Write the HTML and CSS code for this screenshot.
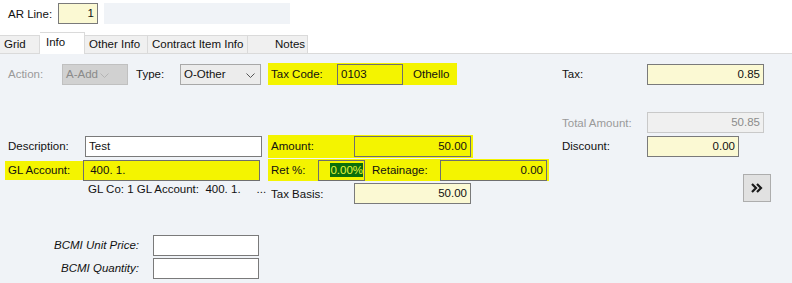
FILE: index.html
```html
<!DOCTYPE html>
<html lang="en">
<head>
    <meta charset="UTF-8">
    <title>AR Line</title>
    <link rel="stylesheet" href="styles.css">
</head>
<body>
    <div class="top">
        <span class="lbl ar-lbl">AR Line:</span>
        <div class="field yellow ar-field">1</div>
        <div class="ar-desc"></div>
    </div>

    <div class="tabs">
        <div class="tab tab-grid">Grid</div>
        <div class="tab active tab-info">Info</div>
        <div class="tab tab-other">Other Info</div>
        <div class="tab tab-contract">Contract Item Info</div>
        <div class="tab tab-notes">Notes</div>
    </div>

    <div class="panel">
        <!-- left column -->
        <div class="cell c1 r1">
            <span class="lbl dim w-action">Action:</span>
            <div class="combo disabled w-add">A-Add
                <svg class="chev" width="9" height="5" viewBox="0 0 9 5"><polyline points="0.5,0.5 4.5,4.5 8.5,0.5" fill="none" stroke="#b4b4b4" stroke-width="1"/></svg>
            </div>
            <span class="lbl w-type">Type:</span>
            <div class="combo w-other">O-Other
                <svg class="chev" width="9" height="5" viewBox="0 0 9 5"><polyline points="0.5,0.5 4.5,4.5 8.5,0.5" fill="none" stroke="#555" stroke-width="1"/></svg>
            </div>
        </div>
        <div class="cell c1 r4">
            <span class="lbl w-left">Description:</span>
            <div class="field white w-desc">Test</div>
        </div>
        <div class="cell c1 r5">
            <div class="hl hl-gl">
                <span class="lbl w-left-hl">GL Account:</span>
                <div class="field left w-desc">&nbsp;400. 1.</div>
            </div>
        </div>
        <div class="cell c1 r6 glco">GL Co: 1 GL Account:&nbsp; 400. 1.&nbsp;&nbsp;&nbsp;&nbsp; ...</div>
        <div class="cell c1 r8">
            <span class="lbl bcmi">BCMI Unit Price:</span>
            <div class="field white w-bcmi"></div>
        </div>
        <div class="cell c1 r9">
            <span class="lbl bcmi">BCMI Quantity:</span>
            <div class="field white w-bcmi"></div>
        </div>

        <!-- middle column -->
        <div class="cell c2 r1">
            <div class="hl hl-tax">
                <span class="lbl w-taxcode">Tax Code:</span>
                <div class="field left w-code">0103</div>
                <span class="lbl othello">Othello</span>
            </div>
        </div>
        <div class="cell c2 r4">
            <div class="hl hl-amt">
                <span class="lbl w-mid">Amount:</span>
                <div class="field w-amt">50.00</div>
            </div>
        </div>
        <div class="cell c2 r5">
            <div class="hl hl-ret">
                <span class="lbl w-ret">Ret %:</span>
                <div class="field focus w-pct"><span class="sel">0.00%</span></div>
                <span class="lbl w-retain">Retainage:</span>
                <div class="field w-retval">0.00</div>
            </div>
        </div>
        <div class="cell c2 r6">
            <span class="lbl w-mid-plain">Tax Basis:</span>
            <div class="field yellow w-amt">50.00</div>
        </div>

        <!-- right column -->
        <div class="cell c3 r1">
            <span class="lbl w-right">Tax:</span>
            <div class="field yellow w-tot">0.85</div>
        </div>
        <div class="cell c3 r3">
            <span class="lbl dim w-right">Total Amount:</span>
            <div class="field readonly w-tot">50.85</div>
        </div>
        <div class="cell c3 r4">
            <span class="lbl w-right">Discount:</span>
            <div class="field yellow w-disc">0.00</div>
        </div>
        <div class="cell c3 r56 btn-cell">
            <button class="more" title="More">
                <svg width="12" height="10" viewBox="0 0 12 10"><polyline points="1,1 5,5 1,9" fill="none" stroke="#1a1a1a" stroke-width="2.2"/><polyline points="6,1 10,5 6,9" fill="none" stroke="#1a1a1a" stroke-width="2.2"/></svg>
            </button>
        </div>
    </div>
</body>
</html>
```

FILE: styles.css
```css
body {
    margin: 0;
    padding: 0;
    width: 792px;
    height: 283px;
    overflow: hidden;
    background: #ffffff;
    font-family: "Liberation Sans", Arial, sans-serif;
    font-size: 11.5px;
    color: #111111;
}

/* top strip */
.top {
    display: flex;
    align-items: center;
    height: 21px;
    padding: 3px 0 0 8px;
}
.ar-lbl {
    width: 50px;
}
.ar-field {
    width: 40px;
    height: 21px;
}
.ar-desc {
    width: 186px;
    height: 21px;
    margin-left: 6px;
    background: #f0f3f7;
}

/* tabs */
.tabs {
    display: flex;
    align-items: flex-end;
    height: 21px;
    margin-top: 8px;
    border-bottom: 1px solid #dadada;
}
.tab {
    height: 17px;
    line-height: 17px;
    background: #f0f0f0;
    border: 1px solid #dadada;
    border-bottom: none;
    border-left: none;
    box-sizing: content-box;
    padding-left: 4px;
}
.tab.active {
    height: 21px;
    line-height: 19px;
    background: #ffffff;
    margin-bottom: -1px;
    padding-left: 6px;
}
.tab-grid { width: 35px; }
.tab-info { width: 38px; }
.tab-other { width: 58px; }
.tab-contract { width: 95px; }
.tab-notes { width: 32px; padding-left: 27px; }

/* main panel */
.panel {
    display: grid;
    grid-template-columns: 268px 286px 238px;
    grid-template-rows: 9px 22px 26px 23px 24px 24px 23px 28px 24px 22px 1fr;
    height: 230px;
    background: #f0f3f7;
}
.cell {
    display: flex;
    align-items: center;
}
.c1 { grid-column: 1; padding-left: 8px; }
.c2 { grid-column: 2; }
.c3 { grid-column: 3; padding-left: 8px; }
.r1 { grid-row: 2; }
.r3 { grid-row: 4; }
.r4 { grid-row: 5; }
.r5 { grid-row: 6; }
.r6 { grid-row: 7; }
.r8 { grid-row: 9; }
.r9 { grid-row: 10; }
.r56 { grid-row: 6 / 8; }

.lbl {
    white-space: nowrap;
    flex: none;
}
.dim {
    color: #9a9a9a;
}

/* inputs */
.field {
    box-sizing: border-box;
    height: 21px;
    line-height: 19px;
    border: 1px solid #7a7a7a;
    padding: 0 3px;
    text-align: right;
    white-space: nowrap;
    flex: none;
}
.field.left { text-align: left; }
.white { background: #ffffff; text-align: left; }
.yellow { background: #fbf9d3; }
.readonly {
    background: #f0f0f0;
    border-color: #c9c9c9;
    color: #8c8c8c;
}
.focus {
    border-color: #3b8ddd;
    padding: 0 1px 0 0;
}
.sel {
    background: #0b6f0b;
    color: #e8f53a;
    padding: 1px 0;
}

.combo {
    box-sizing: border-box;
    position: relative;
    height: 21px;
    line-height: 19px;
    padding-left: 3px;
    background: #ececec;
    border: 1px solid #a8a8a8;
    flex: none;
}
.combo.disabled {
    background: #d1d1d1;
    border-color: #c0c0c0;
    color: #8a8a8a;
}
.chev {
    position: absolute;
    top: 8px;
    right: 5px;
}
.combo.disabled .chev {
    right: 18px;
}

/* yellow marker highlights */
.hl {
    display: flex;
    align-items: center;
    background: #f4f400;
}

/* widths */
.w-action { width: 54px; }
.w-add { width: 66px; }
.w-type { width: 44px; margin-left: 8px; }
.w-other { width: 81px; }
.w-left { width: 77px; }
.w-left-hl { width: 75px; }
.w-desc { width: 177px; }
.hl-gl { margin-left: -3px; padding-left: 3px; height: 19px; }
.hl-gl .field { height: 21px; }
.glco {
    align-items: flex-start;
    padding-left: 88px;
    padding-top: 1px;
}
.bcmi {
    width: 131px;
    text-align: right;
    font-style: italic;
    margin-right: 14px;
}
.w-bcmi { width: 106px; }

.hl-tax { width: 186px; height: 22px; padding-left: 3px; }
.w-taxcode { width: 66px; }
.w-code { width: 66px; background: transparent; }
.othello { margin-left: 10px; }
.hl-amt { width: 202px; height: 23px; padding-left: 3px; }
.w-mid { width: 83px; }
.w-mid-plain { width: 83px; padding-left: 3px; }
.w-amt { width: 117px; }
.hl-ret { width: 278px; height: 22px; padding-left: 3px; }
.w-ret { width: 47px; }
.w-pct { width: 47px; }
.w-retain { width: 68px; margin-left: 7px; }
.w-retval { width: 107px; }
.hl .field { border-color: #6f6f6f; }

.w-right { width: 85px; }
.w-tot { width: 117px; }
.w-disc { width: 92px; }

.btn-cell {
    align-items: flex-start;
    padding-top: 16px;
}
.more {
    display: flex;
    align-items: center;
    justify-content: center;
    margin-left: 181px;
    width: 28px;
    height: 28px;
    padding: 0;
    background: #e1e1e1;
    border: 1px solid #adadad;
}
```
